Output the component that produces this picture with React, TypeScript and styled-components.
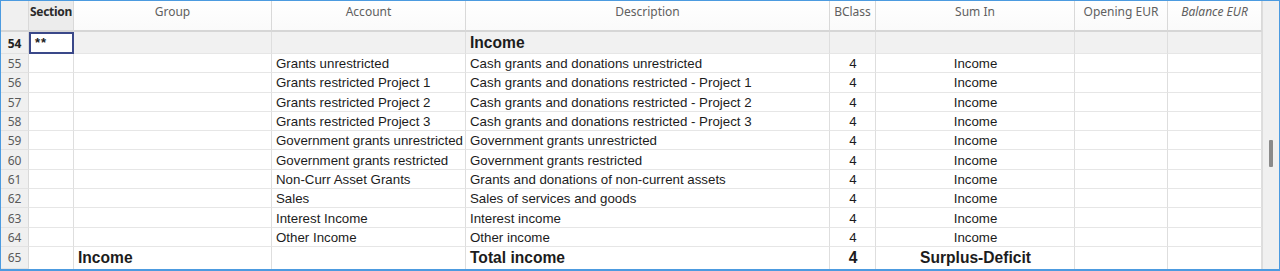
import React from 'react';
import styled, {createGlobalStyle, css} from "styled-components";

const GlobalStyle = createGlobalStyle`
    html, body {
        margin: 0;
        padding: 0;
        background: #ffffff;
    }
`

type Col = { key: string; title: string; width: number; align: "left" | "center" };

const columns: Col[] = [
    {key: "section", title: "Section", width: 45, align: "left"},
    {key: "group", title: "Group", width: 198, align: "left"},
    {key: "account", title: "Account", width: 194, align: "left"},
    {key: "desc", title: "Description", width: 364, align: "left"},
    {key: "bclass", title: "BClass", width: 46, align: "center"},
    {key: "sumIn", title: "Sum In", width: 199, align: "center"},
    {key: "opening", title: "Opening EUR", width: 93, align: "left"},
    {key: "balance", title: "Balance EUR", width: 94, align: "left"},
]

type Row = { n: number; section?: string; group?: string; account?: string; desc?: string; bclass?: string; sumIn?: string; opening?: string; balance?: string };

const rows: Row[] = [
    {n: 55, account: "Grants unrestricted", desc: "Cash grants and donations unrestricted", bclass: "4", sumIn: "Income"},
    {n: 56, account: "Grants restricted Project 1", desc: "Cash grants and donations restricted - Project 1", bclass: "4", sumIn: "Income"},
    {n: 57, account: "Grants restricted Project 2", desc: "Cash grants and donations restricted - Project 2", bclass: "4", sumIn: "Income"},
    {n: 58, account: "Grants restricted Project 3", desc: "Cash grants and donations restricted - Project 3", bclass: "4", sumIn: "Income"},
    {n: 59, account: "Government grants unrestricted", desc: "Government grants unrestricted", bclass: "4", sumIn: "Income"},
    {n: 60, account: "Government grants restricted", desc: "Government grants restricted", bclass: "4", sumIn: "Income"},
    {n: 61, account: "Non-Curr Asset Grants", desc: "Grants and donations of non-current assets", bclass: "4", sumIn: "Income"},
    {n: 62, account: "Sales", desc: "Sales of services and goods", bclass: "4", sumIn: "Income"},
    {n: 63, account: "Interest Income", desc: "Interest income", bclass: "4", sumIn: "Income"},
    {n: 64, account: "Other Income", desc: "Other income", bclass: "4", sumIn: "Income"},
]

const totalRow: Record<string, string> = {group: "Income", desc: "Total income", bclass: "4", sumIn: "Surplus-Deficit"}

const gridCols = `28px ${columns.map(c => c.width + "px").join(" ")}`

export default function App() {
    return (
        <>
            <GlobalStyle/>
            <S_Frame>
                <S_Table>
                    <S_Grid>
                        <S_HeadCell $kind="num"/>
                        {columns.map(c => (
                            <S_HeadCell key={c.key}
                                        $kind={c.key === "section" ? "selected" : "plain"}
                                        $italic={c.key === "balance"}>
                                {c.title}
                            </S_HeadCell>
                        ))}

                        <S_NumCell $current $h={22}>54</S_NumCell>
                        {columns.map(c => c.key === "section"
                            ? <S_Cell key={c.key} $h={22} $selected>**</S_Cell>
                            : <S_Cell key={c.key} $h={22} $band $align={c.align} $big>
                                {c.key === "desc" ? "Income" : ""}
                            </S_Cell>
                        )}

                        {rows.map(r => (
                            <React.Fragment key={r.n}>
                                <S_NumCell $h={19.3}>{r.n}</S_NumCell>
                                {columns.map(c => (
                                    <S_Cell key={c.key} $h={19.3} $align={c.align}>
                                        {(r as any)[c.key] ?? ""}
                                    </S_Cell>
                                ))}
                            </React.Fragment>
                        ))}

                        <S_NumCell $h={22}>65</S_NumCell>
                        {columns.map(c => (
                            <S_Cell key={c.key} $h={22} $align={c.align} $big $last>
                                {totalRow[c.key] ?? ""}
                            </S_Cell>
                        ))}
                    </S_Grid>
                </S_Table>
                <S_Scrollbar>
                    <S_Thumb/>
                </S_Scrollbar>
            </S_Frame>
        </>
    );
}

const S_Frame = styled.div`
    box-sizing: border-box;
    width: 1280px;
    height: 271px;
    display: flex;
    border: 1px solid #4c9be0;
    border-bottom-width: 2px;
    overflow: hidden;
    background: #ffffff;
`

const S_Table = styled.div`
    width: 1261px;
    overflow: hidden;
`

const S_Grid = styled.div`
    display: grid;
    grid-template-columns: ${gridCols};
`

const S_HeadCell = styled.div<{ $kind: "num" | "selected" | "plain"; $italic?: boolean }>`
    box-sizing: border-box;
    height: 31px;
    padding-top: 3px;
    text-align: center;
    font-family: "Noto Sans", "Open Sans", sans-serif;
    font-size: 12px;
    line-height: 16px;
    color: #606060;
    font-style: ${p => p.$italic ? "italic" : "normal"};
    background: linear-gradient(#ffffff, #fafafa);
    border-right: 1px solid #d9d9d9;
    border-bottom: 2px solid #d6d6d6;
    white-space: nowrap;
    overflow: hidden;

    ${p => p.$kind === "num" && css`
        background: #f0f0f0;
    `}
    ${p => p.$kind === "selected" && css`
        background: #ececec;
        color: #2a2a2a;
        font-weight: 700;
        letter-spacing: -0.3px;
    `}
`

const S_NumCell = styled.div<{ $h: number; $current?: boolean }>`
    box-sizing: border-box;
    height: ${p => p.$h}px;
    display: flex;
    align-items: center;
    justify-content: center;
    padding-top: 1px;
    background: #f0f0f0;
    border-right: 1px solid #d9d9d9;
    border-bottom: 1px solid #e2e2e2;
    font-family: "Noto Sans", "Open Sans", sans-serif;
    font-size: 12px;
    color: ${p => p.$current ? "#222222" : "#5a5a5a"};
    font-weight: ${p => p.$current ? 700 : 400};
`

const S_Cell = styled.div<{ $h: number; $align?: "left" | "center"; $band?: boolean; $big?: boolean; $selected?: boolean; $last?: boolean }>`
    box-sizing: border-box;
    height: ${p => p.$h}px;
    display: flex;
    align-items: center;
    justify-content: ${p => p.$align === "center" ? "center" : "flex-start"};
    padding: 1px 3px 0 4px;
    font-family: "Liberation Sans", Arial, sans-serif;
    font-size: ${p => p.$big ? "15.6px" : "13.3px"};
    font-weight: ${p => p.$big ? 700 : 400};
    color: #1c1c1c;
    white-space: nowrap;
    overflow: hidden;
    background: ${p => p.$band ? "#f1f1f1" : "#ffffff"};
    border-right: 1px solid #dedede;
    border-bottom: ${p => p.$last ? "none" : "1px solid #e6e6e6"};

    ${p => p.$selected && css`
        align-items: flex-start;
        padding: 1px 4px;
        border: 2px solid #3a4889;
        font-size: 13px;
        font-weight: 700;
        letter-spacing: 1px;
    `}
`

const S_Scrollbar = styled.div`
    flex: 1;
    position: relative;
    background: #f0f0f0;
    border-left: 1px solid #dcdcdc;
`

const S_Thumb = styled.div`
    position: absolute;
    top: 139px;
    left: 6px;
    width: 4px;
    height: 27px;
    border-radius: 1px;
    background: #8a8a8a;
`
